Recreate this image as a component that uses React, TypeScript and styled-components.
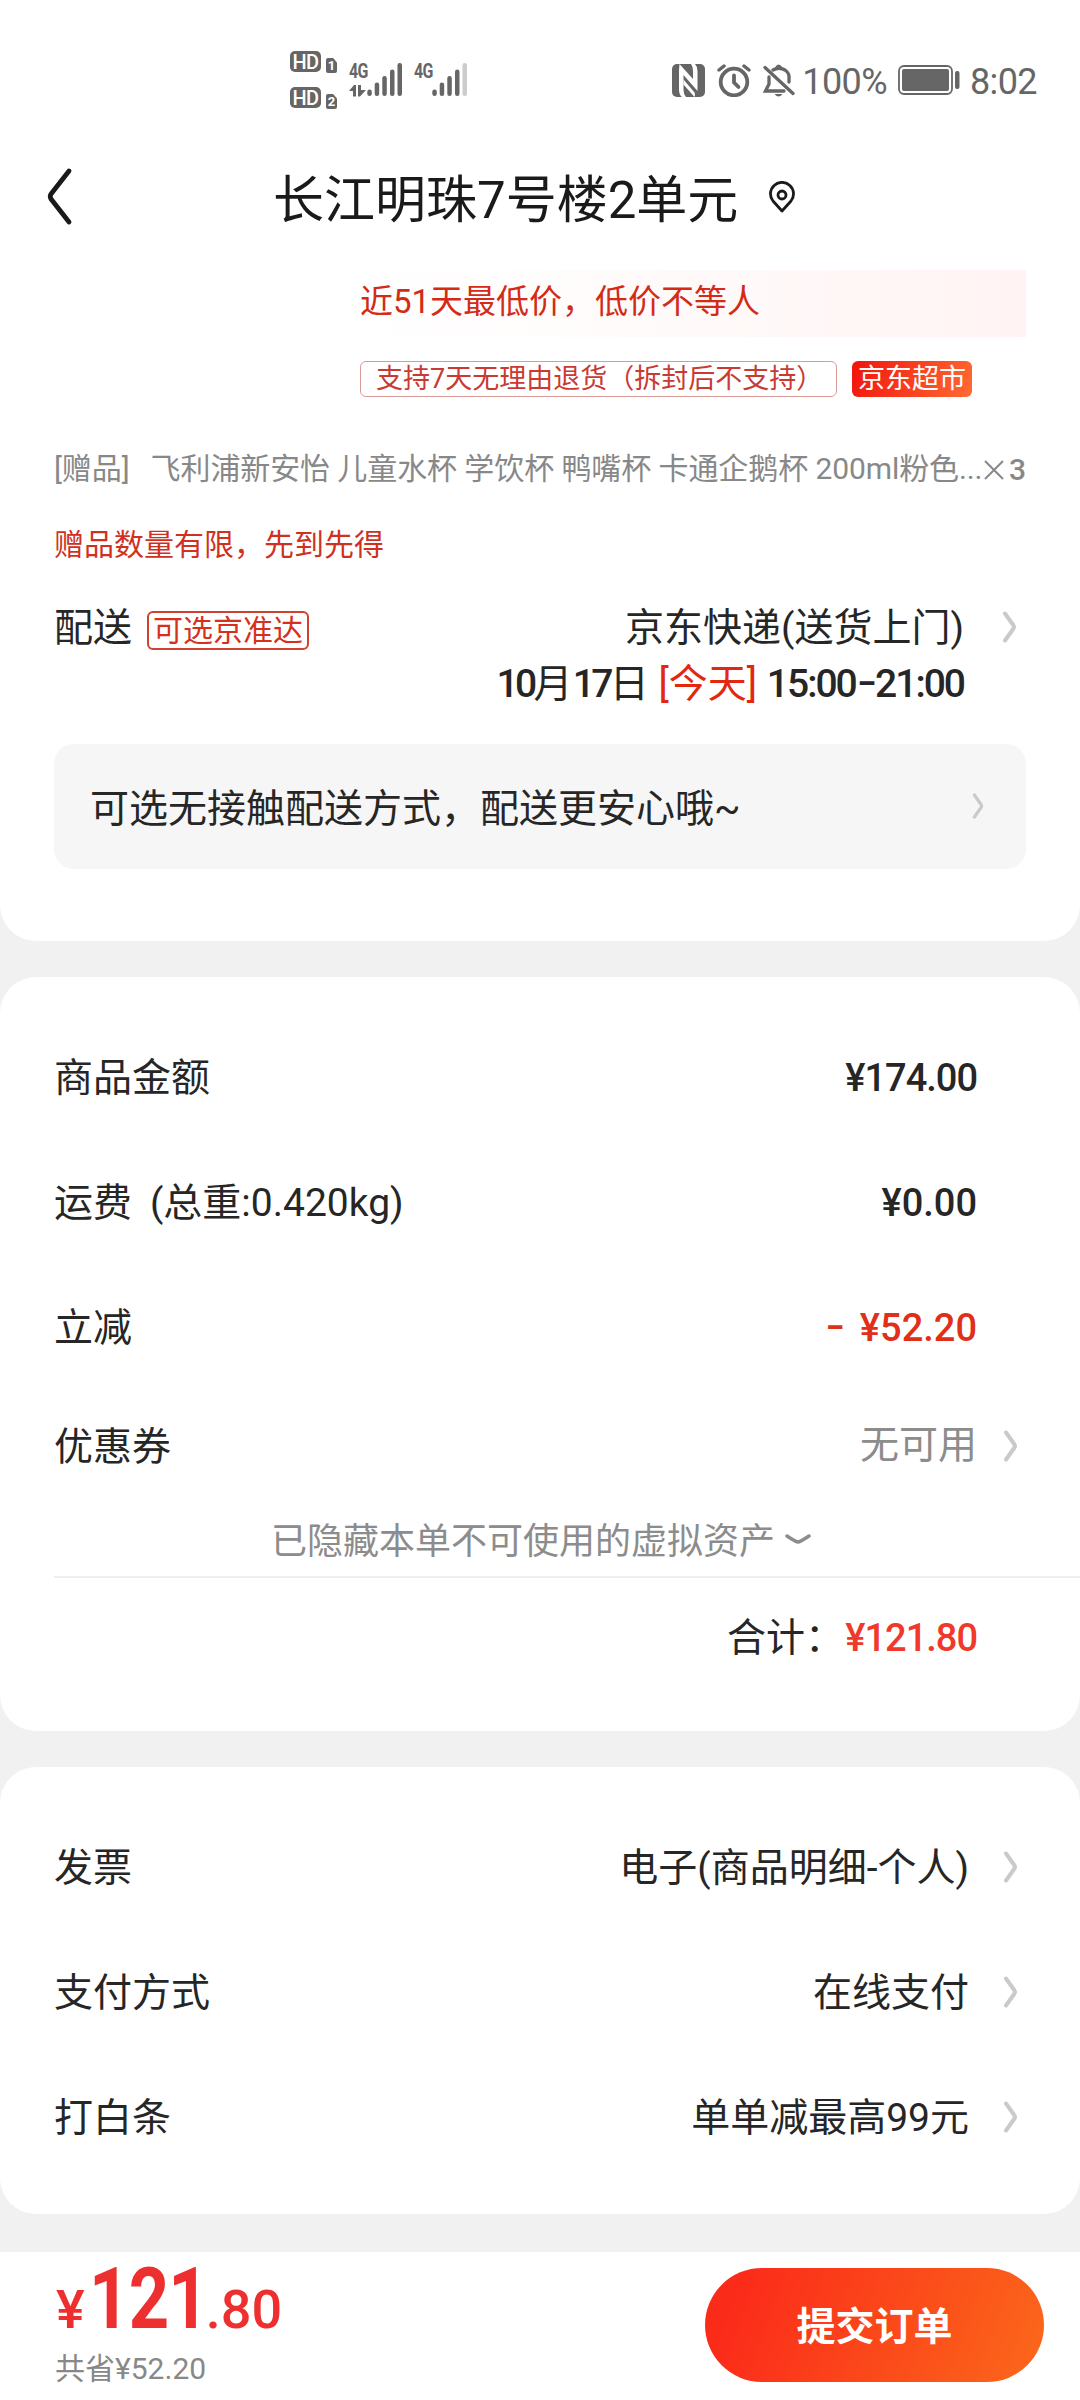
import React from "react";
import styled, { createGlobalStyle } from "styled-components";

const Global = createGlobalStyle`
  * { box-sizing: border-box; }
  body { margin: 0; background: #f1f1f1; }
`;

const Page = styled.div`
  width: 1080px;
  height: 2400px;
  display: flex;
  flex-direction: column;
  background: #f1f1f1;
  color: #262626;
  font-family: Roboto, "Noto Sans CJK SC", sans-serif;
  font-size: 39px;
  line-height: 1;
  white-space: nowrap;
  overflow: hidden;
`;

const StatusBar = styled.header`
  display: flex;
  justify-content: space-between;
  height: 140px;
  padding: 51px 43px 0 290px;
  color: #666;
`;

const Signals = styled.div`
  display: flex;
  align-items: flex-start;
`;

const HdColumn = styled.div`
  display: grid;
  gap: 14px;
  margin-right: 12px;
`;

const HdRow = styled.div`
  display: flex;
  align-items: flex-end;
  gap: 6px;
  height: 22px;
`;

const HdBadge = styled.span`
  width: 31px;
  height: 21px;
  margin: 0 -1px 1px 0;
  border-radius: 5px;
  background: #666;
  color: #fff;
  font: 500 20px/22px Roboto, sans-serif;
  letter-spacing: -0.5px;
  text-align: center;
`;

const SimBadge = styled.span`
  width: 11px;
  height: 15px;
  background: #666;
  border-radius: 2px;
  clip-path: polygon(0 0, 65% 0, 100% 30%, 100% 100%, 0 100%);
  color: #fff;
  font: 700 13px/16px Roboto, sans-serif;
  text-align: center;
`;

const Network = styled.div<{ $gap: number }>`
  display: flex;
  width: 53px;
  height: 34px;
  margin: 12px ${(p) => p.$gap}px 0 0;
`;

const NetLabel = styled.div`
  width: 18px;
  display: flex;
  flex-direction: column;
  justify-content: space-between;
  font: 700 21px/16px Roboto, sans-serif;
  letter-spacing: -1px;
`;

const NetText = styled.span`
  display: block;
  width: 24px;
  transform: scaleX(0.76);
  transform-origin: left;
`;

const StatusRight = styled.div`
  display: flex;
  align-items: center;
  height: 34px;
  margin-top: 12px;
  font-size: 36px;
`;

const StatusText = styled.span<{ $left: number }>`
  margin-left: ${(p) => p.$left}px;
  padding-top: 3px;
  letter-spacing: -0.6px;
`;

const Glyph = styled.svg<{ $left?: number }>`
  display: block;
  flex: none;
  margin-left: ${(p) => p.$left ?? 0}px;
`;

const Card = styled.section<{ $height: number; $first?: boolean }>`
  flex: none;
  height: ${(p) => p.$height}px;
  margin-bottom: 36px;
  background: #fff;
  border-radius: ${(p) => (p.$first ? "0 0 36px 36px" : "36px")};
`;

const TitleBar = styled.div`
  display: flex;
  align-items: center;
  height: 114px;
  padding-left: 45px;
  color: #1a1a1a;
`;

const Title = styled.h1`
  margin: 7px 0 0 198px;
  font-size: 51px;
  font-weight: 400;
  line-height: 60px;
`;

const Banner = styled.div`
  height: 67px;
  margin: 16px 54px 0 360px;
  background: linear-gradient(90deg, #fff 0%, #fffbfb 40%, #fff4f3 100%);
  color: #d42b16;
  font-size: 33px;
  line-height: 63px;
`;

const Tags = styled.div`
  display: flex;
  gap: 15px;
  margin: 24px 0 0 360px;
  height: 36px;
  font-size: 27px;
`;

const OutlineTag = styled.span`
  width: 477px;
  padding-left: 15px;
  border: 1.5px solid #d99a96;
  border-radius: 6px;
  color: #c93a32;
  line-height: 34px;
`;

const SolidTag = styled.span`
  width: 120px;
  border-radius: 6px;
  background: linear-gradient(110deg, #f2140c, #ff6a32);
  color: #fff;
  text-align: center;
  line-height: 37px;
`;

const GiftRow = styled.div`
  display: flex;
  justify-content: space-between;
  margin: 49px 54px 0;
  height: 48px;
  font-size: 30px;
  line-height: 46px;
  letter-spacing: -0.09px;
  color: #888;
`;

const GiftName = styled.span`
  margin-left: 21px;
`;

const GiftCount = styled.span`
  display: flex;
  align-items: center;
  gap: 5px;
  font-weight: 500;
`;

const GiftNote = styled.p`
  margin: 27px 54px 0;
  font-size: 30px;
  line-height: 47px;
  color: #d0311f;
`;

const Delivery = styled.div`
  display: flex;
  align-items: flex-start;
  height: 121px;
  margin: 32px 63px 0 54px;
  line-height: 56px;
`;

const DeliveryTag = styled.span`
  width: 162px;
  height: 39px;
  margin: 11px 0 0 15px;
  border: 2px solid #d0412f;
  border-radius: 6px;
  color: #d6301c;
  font-size: 30px;
  line-height: 36px;
  text-align: center;
`;

const DeliveryInfo = styled.div`
  flex: 1;
  text-align: right;
`;

const DeliveryArrow = styled.div`
  padding-top: 11px;
`;

const Strong = styled.span<{ $track?: number }>`
  font-weight: 500;
  letter-spacing: ${(p) => p.$track ?? 0}px;
`;

const Dash = styled.span<{ $gap?: number }>`
  display: inline-block;
  margin: 0 ${(p) => p.$gap ?? 4}px 0 4px;
  transform: scaleX(1.45) translateY(-2px);
`;

const Red = styled.span`
  color: #e2280f;
`;

const Notice = styled.div`
  display: flex;
  align-items: center;
  justify-content: space-between;
  height: 125px;
  margin: 23px 54px 0;
  padding: 5px 42px 0 36px;
  border-radius: 20px;
  background: #f6f6f6;
`;

const NoticeArrow = styled.div`
  padding-bottom: 7px;
`;

const Row = styled.div<{ $height: number; $right?: number }>`
  display: flex;
  align-items: center;
  height: ${(p) => p.$height}px;
  padding: 0 ${(p) => p.$right ?? 103}px 0 54px;
`;

const RowArrow = styled.div`
  padding-bottom: 3px;
`;

const Value = styled.span<{ $tone?: string; $lift?: number }>`
  margin-left: auto;
  padding-bottom: ${(p) => p.$lift ?? 0}px;
  color: ${(p) => p.$tone ?? "inherit"};
`;

const Weight = styled.span`
  margin-left: 18px;
`;

const Price = styled.span<{ $tone?: string; $track?: number }>`
  margin-left: auto;
  font-weight: 500;
  font-size: 38px;
  letter-spacing: ${(p) => p.$track ?? 0}px;
  color: ${(p) => p.$tone ?? "inherit"};
`;

const HiddenAssets = styled.div`
  display: flex;
  align-items: center;
  height: 68px;
  margin-top: 43px;
  padding-left: 271px;
  font-size: 36px;
  color: #8c8c8c;
`;

const HiddenArrow = styled.div`
  padding-bottom: 4px;
`;

const Divider = styled.div`
  height: 2px;
  margin-left: 54px;
  background: #eee;
`;

const Total = styled.div`
  display: flex;
  align-items: center;
  height: 120px;
  padding: 0 103px 0 727px;
`;

const Footer = styled.footer`
  display: flex;
  justify-content: space-between;
  flex: none;
  height: 148px;
  margin-top: 2px;
  padding: 16px 36px 0 56px;
  background: #fff;
`;

const Amount = styled.div`
  display: flex;
  align-items: baseline;
  height: 84px;
  color: #ee2f2f;
  font-size: 54px;
  line-height: 62px;
`;

const Yen = styled.span`
  font-weight: 500;
`;

const AmountInt = styled.strong`
  display: inline-block;
  width: 117px;
  margin-left: 4px;
  font-size: 86px;
  font-weight: 700;
  letter-spacing: -1px;
  transform: scaleX(0.82);
  transform-origin: left;
`;

const AmountDec = styled.strong`
  font-weight: 500;
`;

const Saved = styled.div`
  margin-left: -1px;
  color: #888;
  font-size: 30px;
  line-height: 34px;
`;

const Submit = styled.button`
  width: 339px;
  height: 114px;
  border: 0;
  border-radius: 57px;
  background: linear-gradient(110deg, #fb2b1a 10%, #fb651a 95%);
  color: #fff;
  font: 700 39px/1 Roboto, "Noto Sans CJK SC", sans-serif;
  padding: 4px 0 0;
`;

const Chevron = ({ left = 0, small = false }: { left?: number; small?: boolean }) => (
  <Glyph $left={left} width={small ? 12 : 15} height={small ? 26 : 32} viewBox="0 0 15 32" preserveAspectRatio="none" fill="none" stroke="#cacaca" strokeWidth="4" strokeLinecap="round" strokeLinejoin="round">
    <path d="M3 2.500 L11.500 14.500 Q12.500 16 11.500 17.500 L3 29.500" />
  </Glyph>
);

const Bars = ({ weak = false }: { weak?: boolean }) => (
  <Glyph width="36" height="34" viewBox="0 0 36 34" fill="#666">
    <rect x="0.300" y="26.500" width="4.500" height="6.500" rx="2.200" />
    <rect x="7.700" y="19.500" width="4.500" height="13.500" rx="2.200" />
    <rect x="15.300" y="13" width="4.500" height="20" rx="2.200" />
    <rect x="23" y="6.500" width="4.500" height="26.500" rx="2.200" />
    <rect x="30.500" y="0" width="4.500" height="33" rx="2.200" fill={weak ? "#ccc" : "#666"} />
  </Glyph>
);

const NfcIcon = () => (
  <Glyph width="33" height="33" viewBox="0 0 33 33">
    <rect width="33" height="33" rx="5" fill="#666" />
    <path d="M7.500 0 L21 15 V7 Q21 2.500 19 0 H23 Q25.500 2.500 25.500 7 V27 L11.500 11 V26 Q11.500 30.500 14 33 H10 Q7 30.500 7 26 V6 Z" fill="#fff" />
    <path d="M11.500 15.500 L22.500 28.500 Q23.500 31 22.500 33 L11.500 20.500 Z" fill="#fff" />
    <path d="M9.500 4 L9.500 26" stroke="#fff" strokeWidth="1.500" />
  </Glyph>
);

const AlarmIcon = () => (
  <Glyph $left={12} width="34" height="33" viewBox="0 0 34 33" fill="none" stroke="#666" strokeWidth="3.800" strokeLinecap="round">
    <circle cx="17" cy="18" r="13.300" />
    <path d="M17 11.500 V18.500 L21.500 23" />
    <path d="M2 6 L7 2 M32 6 L27 2" strokeWidth="3.500" />
  </Glyph>
);

const BellOffIcon = () => (
  <Glyph $left={12} width="32" height="33" viewBox="0 0 32 33" fill="none" stroke="#666" strokeWidth="3.300" strokeLinecap="round">
    <path d="M6 13 V20 L2.500 27 H21 M10 6 Q16 2.500 22 6 Q26.500 9 26 14 V18" />
    <path d="M13.500 4 Q15.500 0 18 4" strokeWidth="3" />
    <path d="M2 3.500 L30 29.500" />
    <path d="M11.500 30 H19.500 Q15.500 35 11.500 30 Z" fill="#666" stroke="none" />
  </Glyph>
);

const BatteryIcon = () => (
  <Glyph $left={11} width="62" height="30" viewBox="0 0 62 30">
    <rect x="1" y="1" width="53" height="28" rx="5" fill="none" stroke="#666" strokeWidth="1.800" />
    <rect x="4" y="4" width="47" height="22" rx="2" fill="#666" />
    <rect x="57" y="6" width="4.500" height="18" rx="2" fill="#666" />
  </Glyph>
);

const services = [
  ["发票", "电子(商品明细-个人)"],
  ["支付方式", "在线支付"],
  ["打白条", "单单减最高99元"],
];

export default function App() {
  return (
    <Page>
      <Global />
      <Card $height={941} $first>
        <StatusBar>
          <Signals>
            <HdColumn>
              {["1", "2"].map((n) => (
                <HdRow key={n}>
                  <HdBadge>HD</HdBadge>
                  <SimBadge>{n}</SimBadge>
                </HdRow>
              ))}
            </HdColumn>
            <Network $gap={12}>
              <NetLabel>
                <NetText>4G</NetText>
                <svg width="17" height="12" viewBox="0 0 17 12" fill="#666">
                  <path d="M0 6 L5 0 H7 V11.500 H4 V6 Z M9 0 H12 V5 H17 L11 11.500 H9 Z" />
                </svg>
              </NetLabel>
              <Bars />
            </Network>
            <Network $gap={0}>
              <NetLabel>
                <NetText>4G</NetText>
              </NetLabel>
              <Bars weak />
            </Network>
          </Signals>
          <StatusRight>
            <NfcIcon />
            <AlarmIcon />
            <BellOffIcon />
            <StatusText $left={7}>100%</StatusText>
            <BatteryIcon />
            <StatusText $left={10}>8:02</StatusText>
          </StatusRight>
        </StatusBar>

        <TitleBar>
          <Glyph width="30" height="60" viewBox="0 0 30 60" fill="none" stroke="#1a1a1a" strokeWidth="4.800" strokeLinecap="round" strokeLinejoin="round">
            <path d="M24 4 L6 27 Q4.500 29.500 6 32 L24 55" />
          </Glyph>
          <Title>长江明珠7号楼2单元</Title>
          <Glyph $left={30} width="28" height="32" viewBox="0 0 28 32" fill="none" stroke="#1a1a1a" strokeWidth="2.800" strokeLinejoin="round">
            <path d="M14 30 L5 20 A11.500 11.500 0 1 1 23 20 Z" />
            <circle cx="14" cy="14" r="4" />
          </Glyph>
        </TitleBar>

        <Banner>近51天最低价，低价不等人</Banner>
        <Tags>
          <OutlineTag>支持7天无理由退货（拆封后不支持）</OutlineTag>
          <SolidTag>京东超市</SolidTag>
        </Tags>

        <GiftRow>
          <span>
            [赠品]
            <GiftName>飞利浦新安怡 儿童水杯 学饮杯 鸭嘴杯 卡通企鹅杯 200ml粉色...</GiftName>
          </span>
          <GiftCount>
            <svg width="20" height="20" viewBox="0 0 20 20" stroke="#888" strokeWidth="2">
              <path d="M1 1 L19 19 M19 1 L1 19" />
            </svg>
            3
          </GiftCount>
        </GiftRow>
        <GiftNote>赠品数量有限，先到先得</GiftNote>

        <Delivery>
          <span>配送</span>
          <DeliveryTag>可选京准达</DeliveryTag>
          <DeliveryInfo>
            <div>京东快递(送货上门)</div>
            <div>
              <Strong $track={-3.6}>10</Strong>月<Strong $track={-3.6}>17</Strong>日 <Red>[今天]</Red>{" "}
              <Strong $track={-2}>
                15:00<Dash>-</Dash>21:00
              </Strong>
            </div>
          </DeliveryInfo>
          <DeliveryArrow>
            <Chevron left={38} />
          </DeliveryArrow>
        </Delivery>

        <Notice>
          <span>可选无接触配送方式，配送更安心哦~</span>
          <NoticeArrow>
            <Chevron small />
          </NoticeArrow>
        </Notice>
      </Card>

      <Card $height={754}>
        <Row $height={202}>
          <span>商品金额</span>
          <Price $track={-1}>¥174.00</Price>
        </Row>
        <Row $height={48}>
          <span>
            运费<Weight>(总重:0.420kg)</Weight>
          </span>
          <Price>¥0.00</Price>
        </Row>
        <Row $height={202}>
          <span>立减</span>
          <Price $tone="#e0301a">
            <Dash $gap={8}>-</Dash> ¥52.20
          </Price>
        </Row>
        <Row $height={36} $right={62}>
          <span>优惠券</span>
          <Value $tone="#8c8c8c" $lift={3}>无可用</Value>
          <RowArrow>
            <Chevron left={26} />
          </RowArrow>
        </Row>
        <HiddenAssets>
          已隐藏本单不可使用的虚拟资产
          <HiddenArrow>
            <Glyph $left={10} width="26" height="12" viewBox="0 0 26 12" fill="none" stroke="#8c8c8c" strokeWidth="3.500" strokeLinecap="round">
              <path d="M2 2 Q11 8 13 8 Q15 8 24 2" />
            </Glyph>
          </HiddenArrow>
        </HiddenAssets>
        <Divider />
        <Total>
          合计：
          <Price $tone="#f0392b" $track={-1}>¥121.80</Price>
        </Total>
      </Card>

      <Card $height={447}>
        {services.map(([label, value], i) => (
          <Row key={label} $height={i === 1 ? 48 : 202} $right={62}>
            <span>{label}</span>
            <Value>{value}</Value>
            <RowArrow>
              <Chevron left={34} />
            </RowArrow>
          </Row>
        ))}
      </Card>

      <Footer>
        <div>
          <Amount>
            <Yen>¥</Yen>
            <AmountInt>121</AmountInt>
            <AmountDec>.80</AmountDec>
          </Amount>
          <Saved>共省¥52.20</Saved>
        </div>
        <Submit>提交订单</Submit>
      </Footer>
    </Page>
  );
}
